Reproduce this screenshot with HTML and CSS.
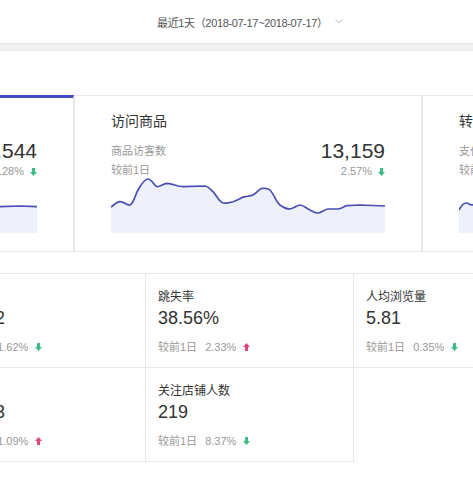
FILE: index.html
```html
<!DOCTYPE html>
<html lang="zh">
<head>
<meta charset="utf-8">
<title>概况</title>
<link rel="stylesheet" href="styles.css">
</head>
<body>
<div class="topbar">
  <span class="range">最近1天（2018-07-17~2018-07-17）</span>
  <svg class="chev" width="8" height="5" viewBox="0 0 8 5"><polyline points="0.5,0.5 4,4 7.5,0.5" fill="none" stroke="#c4c4c4" stroke-width="1"/></svg>
</div>
<div class="band"></div>

<div class="cards">
  <div class="card active">
    <div class="title">访客数</div>
    <div class="stats">
      <div class="left"><div class="sub">店铺访客数</div><div class="sub">较前1日</div></div>
      <div class="right"><div class="num">21,544</div><div class="pct">1.28%<svg class="arr" width="7" height="8" viewBox="0 0 7 8"><path d="M2 0h3v4h2L3.5 8 0 4h2z" fill="#3dbb85"/></svg></div></div>
    </div>
    <svg class="chart" viewBox="0 0 274 58" width="274" height="58">
      <path d="M0 30 L20 24 L40 28 L60 18 L80 22 L100 26 L120 20 L140 24 L160 29 L180 27 L200 30 L220 32 L237 31.7 L257 31 L274 31.7 L274 58 L0 58 Z" fill="#eef0fb"/>
      <path d="M0 30 L20 24 L40 28 L60 18 L80 22 L100 26 L120 20 L140 24 L160 29 L180 27 L200 30 L220 32 L237 31.7 L257 31 L274 31.7" fill="none" stroke="#4a4fb3" stroke-width="1.7" stroke-linejoin="round"/>
    </svg>
  </div>
  <div class="card">
    <div class="title">访问商品</div>
    <div class="stats">
      <div class="left"><div class="sub">商品访客数</div><div class="sub">较前1日</div></div>
      <div class="right"><div class="num">13,159</div><div class="pct">2.57%<svg class="arr" width="7" height="8" viewBox="0 0 7 8"><path d="M2 0h3v4h2L3.5 8 0 4h2z" fill="#3dbb85"/></svg></div></div>
    </div>
    <svg class="chart" viewBox="0 0 274 58" width="274" height="58">
      <path d="M0 32 C4 29 6 27 9 26.7 C13 26.5 16 31 19 30 C23 28 24 20 27 15 C30 10 33 4 37 4 C41 4 43 11 46 11.7 C50 12 52 8.3 56 8.3 C62 8.5 66 11.7 72 11.7 L94 11 C98 11.5 99 14 102 16.7 C106 21 108 27 112 28 C116 28.5 119 27.5 122 26.7 C127 25 130 22.5 134 21.7 C138 21 140 21 142 20 C146 18 148 13.5 151 13.3 C155 13 157 13 159 15 C163 19 165 27 169 30 C173 33 176 34 179 34 C183 33.5 186 30 189 30 C193 30 195 33.5 199 35 C202 36.5 204 38 207 38 C211 37.5 213 34.5 217 34 L227 34 C231 33.5 233 31 236 30.7 L249 30 L274 31 L274 58 L0 58 Z" fill="#eef0fb"/>
      <path d="M0 32 C4 29 6 27 9 26.7 C13 26.5 16 31 19 30 C23 28 24 20 27 15 C30 10 33 4 37 4 C41 4 43 11 46 11.7 C50 12 52 8.3 56 8.3 C62 8.5 66 11.7 72 11.7 L94 11 C98 11.5 99 14 102 16.7 C106 21 108 27 112 28 C116 28.5 119 27.5 122 26.7 C127 25 130 22.5 134 21.7 C138 21 140 21 142 20 C146 18 148 13.5 151 13.3 C155 13 157 13 159 15 C163 19 165 27 169 30 C173 33 176 34 179 34 C183 33.5 186 30 189 30 C193 30 195 33.5 199 35 C202 36.5 204 38 207 38 C211 37.5 213 34.5 217 34 L227 34 C231 33.5 233 31 236 30.7 L249 30 L274 31" fill="none" stroke="#4a4fb3" stroke-width="1.7" stroke-linejoin="round"/>
    </svg>
  </div>
  <div class="card">
    <div class="title">转化</div>
    <div class="stats">
      <div class="left"><div class="sub">支付转化率</div><div class="sub">较前1日</div></div>
      <div class="right"><div class="num">3.52%</div><div class="pct">0.12%<svg class="arr" width="7" height="8" viewBox="0 0 7 8"><path d="M2 0h3v4h2L3.5 8 0 4h2z" fill="#3dbb85"/></svg></div></div>
    </div>
    <svg class="chart" viewBox="0 0 274 58" width="274" height="58">
      <path d="M0 35 C2 31 4 28 7 28 C10 28 11 30 13 30 C18 29 22 22 28 20 C36 18 44 26 52 27 L80 26 L120 28 L160 25 L200 27 L274 26 L274 58 L0 58 Z" fill="#eef0fb"/>
      <path d="M0 35 C2 31 4 28 7 28 C10 28 11 30 13 30 C18 29 22 22 28 20 C36 18 44 26 52 27 L80 26 L120 28 L160 25 L200 27 L274 26" fill="none" stroke="#4a4fb3" stroke-width="1.7" stroke-linejoin="round"/>
    </svg>
  </div>
</div>

<div class="grid">
  <div class="cell">
    <div class="label">浏览量</div>
    <div class="value">12,832</div>
    <div class="cmp"><span>较前1日</span><span>1.62%</span><svg class="arr" width="7" height="8" viewBox="0 0 7 8"><path d="M2 0h3v4h2L3.5 8 0 4h2z" fill="#3dbb85"/></svg></div>
  </div>
  <div class="cell">
    <div class="label">跳失率</div>
    <div class="value">38.56%</div>
    <div class="cmp"><span>较前1日</span><span>2.33%</span><svg class="arr" width="7" height="8" viewBox="0 0 7 8"><path d="M3.5 0L7 4H5v4H2V4H0z" fill="#e0457b"/></svg></div>
  </div>
  <div class="cell">
    <div class="label">人均浏览量</div>
    <div class="value">5.81</div>
    <div class="cmp"><span>较前1日</span><span>0.35%</span><svg class="arr" width="7" height="8" viewBox="0 0 7 8"><path d="M2 0h3v4h2L3.5 8 0 4h2z" fill="#3dbb85"/></svg></div>
  </div>
  <div class="cell">
    <div class="label">访客数</div>
    <div class="value">12,733</div>
    <div class="cmp"><span>较前1日</span><span>1.09%</span><svg class="arr" width="7" height="8" viewBox="0 0 7 8"><path d="M3.5 0L7 4H5v4H2V4H0z" fill="#e0457b"/></svg></div>
  </div>
  <div class="cell">
    <div class="label">关注店铺人数</div>
    <div class="value">219</div>
    <div class="cmp"><span>较前1日</span><span>8.37%</span><svg class="arr" width="7" height="8" viewBox="0 0 7 8"><path d="M2 0h3v4h2L3.5 8 0 4h2z" fill="#3dbb85"/></svg></div>
  </div>
</div>
</body>
</html>
```
FILE: styles.css
```css
* { box-sizing: border-box; margin: 0; padding: 0; }
html, body { background: #fff; overflow: hidden; }
body {
  width: 473px;
  height: 477px;
  font-family: "Liberation Sans", "Noto Sans CJK SC", sans-serif;
  color: #333;
}

.topbar {
  height: 43px;
  display: flex;
  align-items: center;
  padding-left: 157px;
  gap: 7px;
  font-size: 11px;
  color: #555;
}
.range { letter-spacing: -0.35px; }
.chev { display: block; }

.band {
  height: 8px;
  background: #f0f0f2;
  border-top: 1px solid #e0e0e3;
  border-bottom: 1px solid #e8e8ea;
}

.cards {
  display: flex;
  margin-left: -274px;
  margin-top: 44px;
}
.card {
  flex: 0 0 348px;
  background: #fff;
  border: 1px solid #e9e9e9;
  padding: 15px 36px 18px;
}
.card.active {
  border-top: 3px solid #3f4dc0;
  padding-top: 13px;
}
.title {
  font-size: 14px;
  line-height: 20px;
  color: #333;
}
.stats {
  display: flex;
  justify-content: space-between;
  margin-top: 9px;
}
.left { padding-top: 2px; }
.sub {
  font-size: 11px;
  line-height: 19px;
  color: #999;
}
.right { text-align: right; }
.num {
  font-size: 21px;
  line-height: 22px;
  color: #333;
}
.pct {
  display: flex;
  justify-content: flex-end;
  align-items: center;
  gap: 6px;
  font-size: 11px;
  line-height: 19px;
  color: #999;
}
.arr { display: block; flex: none; }
.chart {
  display: block;
  margin-top: -6px;
}

.grid {
  display: grid;
  grid-template-columns: repeat(3, 208px);
  margin-left: -62px;
  margin-top: 21px;
  border-top: 1px solid #e8e8e8;
}
.cell {
  height: 94px;
  border-right: 1px solid #e8e8e8;
  border-bottom: 1px solid #e8e8e8;
  padding: 14px 12px 0;
}
.label {
  font-size: 12px;
  line-height: 18px;
  color: #333;
}
.value {
  font-size: 18px;
  line-height: 24px;
  color: #333;
}
.cmp {
  display: flex;
  align-items: center;
  gap: 8px;
  margin-top: 8px;
  font-size: 11px;
  line-height: 18px;
  color: #999;
}
.cmp .arr { margin-left: -1px; }
```
